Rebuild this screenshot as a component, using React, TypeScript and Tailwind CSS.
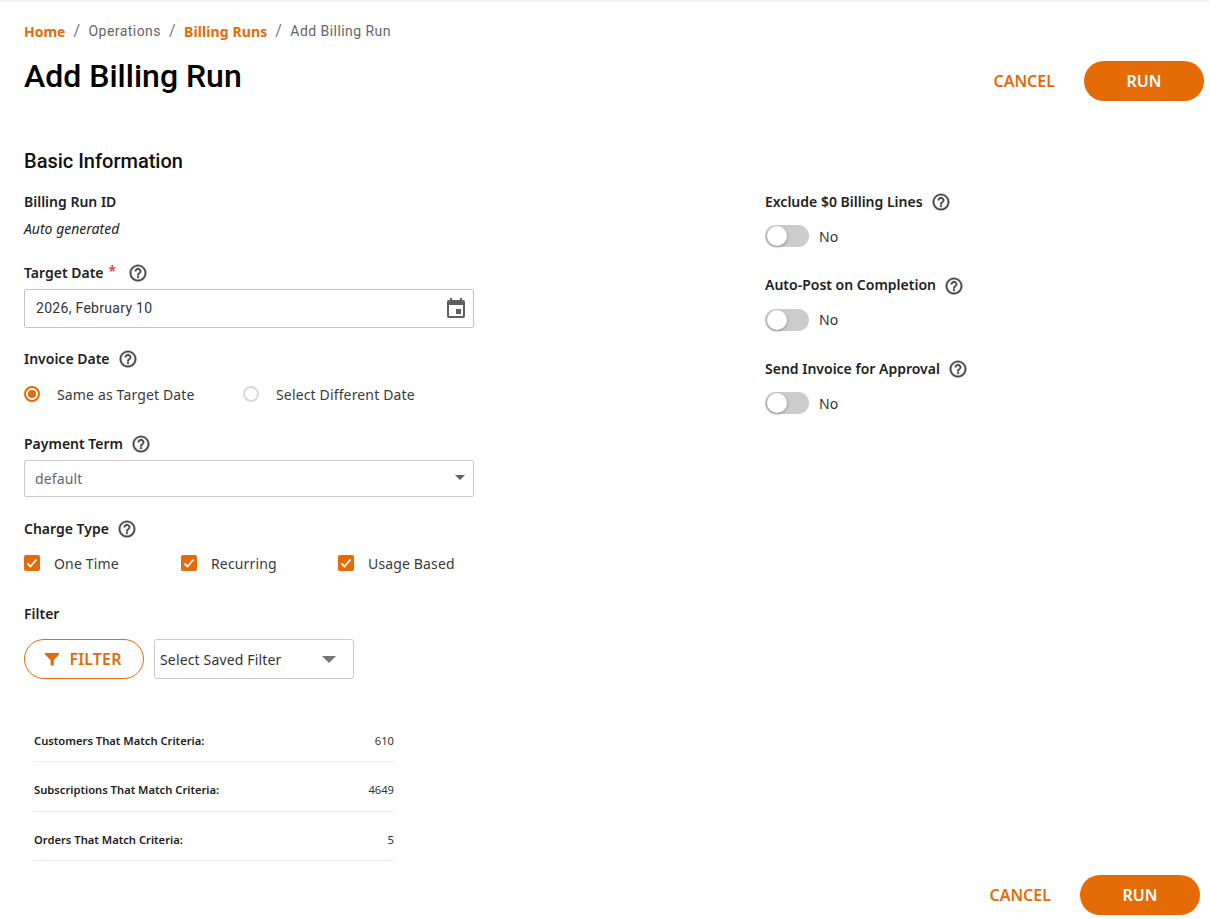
import React from 'react';

const noto = "font-['Noto_Sans',sans-serif]";
const roboto = "font-['Roboto',sans-serif]";

const HelpIcon: React.FC = () => (
  <svg width="20" height="20" viewBox="0 0 24 24" fill="#4a4a4a" stroke="#4a4a4a" strokeWidth="0.4" className="shrink-0 mt-[2px]">
    <path d="M11 18h2v-2h-2v2zm1-16C6.48 2 2 6.48 2 12s4.48 10 10 10 10-4.48 10-10S17.52 2 12 2zm0 18c-4.41 0-8-3.59-8-8s3.59-8 8-8 8 3.59 8 8-3.59 8-8 8zm0-14c-2.21 0-4 1.79-4 4h2c0-1.1.9-2 2-2s2 .9 2 2c0 2-3 1.75-3 5h2c0-2.25 3-2.5 3-5 0-2.21-1.79-4-4-4z" />
  </svg>
);

const Label: React.FC<{ text: string; gap?: string; required?: boolean }> = ({ text, gap = 'gap-[8px]', required }) => (
  <div className={`flex items-center h-[20px] ${gap}`}>
    <span className="text-[14px] font-semibold text-[#212121] whitespace-nowrap">
      {text}
      {required && <span className="text-[#e53935] ml-[5px] relative -top-[2px]">*</span>}
    </span>
    <HelpIcon />
  </div>
);

const Check: React.FC<{ text: string; width: string }> = ({ text, width }) => (
  <div className={`flex items-center gap-[14px] ${width}`}>
    <span className="w-[16px] h-[16px] rounded-[2px] bg-[#e56b07] flex items-center justify-center shrink-0">
      <svg width="12" height="12" viewBox="0 0 12 12" fill="none" stroke="#fff" strokeWidth="1.8">
        <path d="M1.5 6.5 4.5 9.5 10.5 2.5" />
      </svg>
    </span>
    <span className="text-[14px] tracking-[0.15px] text-[#3a3a3a]">{text}</span>
  </div>
);

const Toggle: React.FC = () => (
  <div className="flex items-center gap-[10px] mt-[14px] h-[22px]">
    <span className="relative w-[44px] h-[22px] rounded-full bg-[#cccccc] block">
      <span className="absolute left-[2px] top-[1px] w-[20px] h-[20px] rounded-full bg-white shadow-[0_1px_3px_rgba(0,0,0,0.35)]" />
    </span>
    <span className="text-[14px] text-[#333333]">No</span>
  </div>
);

const Stat: React.FC<{ label: string; value: string }> = ({ label, value }) => (
  <div className="flex items-center justify-between h-[49.5px] border-b border-[#ebebf3] pt-[9px]">
    <span className="text-[11.2px] font-semibold text-[#212121]">{label}</span>
    <span className="text-[11.2px] text-[#333333]">{value}</span>
  </div>
);

const Actions: React.FC<{ className: string }> = ({ className }) => (
  <div className={`flex items-center gap-[29px] ${className}`}>
    <span className="text-[16px] font-semibold text-[#e56b07]">CANCEL</span>
    <button className="w-[120px] h-[40px] rounded-full bg-[#e56b07] text-white text-[16px] font-semibold">RUN</button>
  </div>
);

export default function App() {
  return (
    <div className={`${noto} w-[1209px] h-[919px] bg-white overflow-hidden`}>
      <div className="h-[3px] bg-gradient-to-b from-[#ececec] to-white" />

      <div className="pl-6">
        {/* Header */}
        <div className="flex justify-between items-start">
          <div>
            <div className={`${roboto} flex items-center h-[20px] mt-[18px] text-[14px] tracking-[0.45px] text-[#666666]`}>
              <span className={`${noto} font-bold tracking-normal text-[#e56b07]`}>Home</span>
              <span className="mx-[8px] text-[#777777] text-[16px]">/</span>
              <span>Operations</span>
              <span className="mx-[8px] text-[#777777] text-[16px]">/</span>
              <span className={`${noto} font-bold tracking-[0.1px] text-[#e56b07]`}>Billing Runs</span>
              <span className="mx-[8px] text-[#777777] text-[16px]">/</span>
              <span>Add Billing Run</span>
            </div>
            <h1 className={`${roboto} text-[32px] leading-[40px] font-medium text-black mt-[15px]`}>Add Billing Run</h1>
          </div>
          <Actions className="mt-[58px] mr-[5px]" />
        </div>

        <h2 className={`${roboto} text-[20px] leading-[24px] font-medium text-[#111111] mt-[48px]`}>Basic Information</h2>

        <div className="flex mt-[18px]">
          {/* Left column */}
          <div className="w-[741px] shrink-0">
            <div className="w-[450px]">
              <div className="text-[14px] font-semibold text-[#212121] h-[20px] flex items-center">Billing Run ID</div>
              <div className="text-[14px] italic text-[#222222] mt-[7px] h-[20px] flex items-center">Auto generated</div>

              <div className="mt-[24px]">
                <Label text="Target Date" required gap="gap-[12px]" />
              </div>
              <div className="mt-[7px] h-[39px] border border-[#c4c4c4] rounded-[2px] flex items-center justify-between pl-[11px] pr-[5px]">
                <span className={`${roboto} text-[14px] tracking-[0.3px] text-[#333333]`}>2026, February 10</span>
                <svg width="24" height="24" viewBox="0 0 24 24" fill="#5f5f5f">
                  <path d="M17 12h-5v5h5v-5zM16 1v2H8V1H6v2H5c-1.11 0-1.99.9-1.99 2L3 19c0 1.1.89 2 2 2h14c1.1 0 2-.9 2-2V5c0-1.1-.9-2-2-2h-1V1h-2zm3 18H5V8h14v11z" />
                </svg>
              </div>

              <div className="mt-[20px]">
                <Label text="Invoice Date" />
              </div>
              <div className="flex items-center mt-[16px] h-[20px]">
                <span className="w-[16px] h-[16px] rounded-full border-2 border-[#e56b07] flex items-center justify-center shrink-0">
                  <span className="w-[8px] h-[8px] rounded-full bg-[#e56b07]" />
                </span>
                <span className="text-[14px] tracking-[0.15px] text-[#3a3a3a] ml-[17px] w-[138px] whitespace-nowrap">Same as Target Date</span>
                <span className="w-[16px] h-[16px] rounded-full border-2 border-[#d8d8e0] ml-[48px] shrink-0" />
                <span className="text-[14px] tracking-[0.15px] text-[#3a3a3a] ml-[17px] whitespace-nowrap">Select Different Date</span>
              </div>

              <div className="mt-[29px]">
                <Label text="Payment Term" />
              </div>
              <div className="mt-[7px] h-[37px] border border-[#c9c9d2] rounded-[2px] flex items-center justify-between pl-[10px] pr-[7px]">
                <span className="text-[14px] tracking-[0.15px] text-[#666666]">default</span>
                <span className="w-0 h-0 border-x-[5px] border-x-transparent border-t-[5px] border-t-[#5f5f5f] mr-[1px] -mt-[2px]" />
              </div>

              <div className="mt-[21px]">
                <Label text="Charge Type" />
              </div>
              <div className="flex items-center mt-[15px] h-[20px]">
                <Check text="One Time" width="w-[157px]" />
                <Check text="Recurring" width="w-[157px]" />
                <Check text="Usage Based" width="w-auto" />
              </div>

              <div className="text-[14px] font-semibold text-[#212121] mt-[30px] h-[20px] flex items-center">Filter</div>
              <div className="flex items-center gap-[10px] mt-[16px]">
                <button className="w-[120px] h-[40px] rounded-full border border-[#e56b07] bg-white flex items-center justify-center gap-[9px] text-[16px] font-semibold tracking-[0.15px] text-[#e56b07] pr-[2px]">
                  <svg width="16" height="16" viewBox="0 0 16 16" fill="#e56b07">
                    <path d="M1 2h14v1.6L9.8 9v5.5H6.6V9L1 3.6z" />
                  </svg>
                  FILTER
                </button>
                <div className="w-[200px] h-[40px] border border-[#c9c9d2] rounded-[3px] flex items-center justify-between pl-[5px] pr-[17px]">
                  <span className="text-[14px] tracking-[0.15px] text-[#333333]">Select Saved Filter</span>
                  <span className="w-0 h-0 border-x-[7px] border-x-transparent border-t-[7px] border-t-[#757575]" />
                </div>
              </div>

              <div className="ml-[10px] w-[360px] mt-[33.5px]">
                <Stat label="Customers That Match Criteria:" value="610" />
                <Stat label="Subscriptions That Match Criteria:" value="4649" />
                <Stat label="Orders That Match Criteria:" value="5" />
              </div>
            </div>
          </div>

          {/* Right column */}
          <div className="flex flex-col">
            <Label text="Exclude $0 Billing Lines" />
            <Toggle />
            <div className="mt-[27.5px]">
              <Label text="Auto-Post on Completion" />
            </div>
            <Toggle />
            <div className="mt-[27.5px]">
              <Label text="Send Invoice for Approval" />
            </div>
            <Toggle />
          </div>
        </div>

        <Actions className="justify-end mt-[13.5px] mr-[9px]" />
      </div>
    </div>
  );
}
